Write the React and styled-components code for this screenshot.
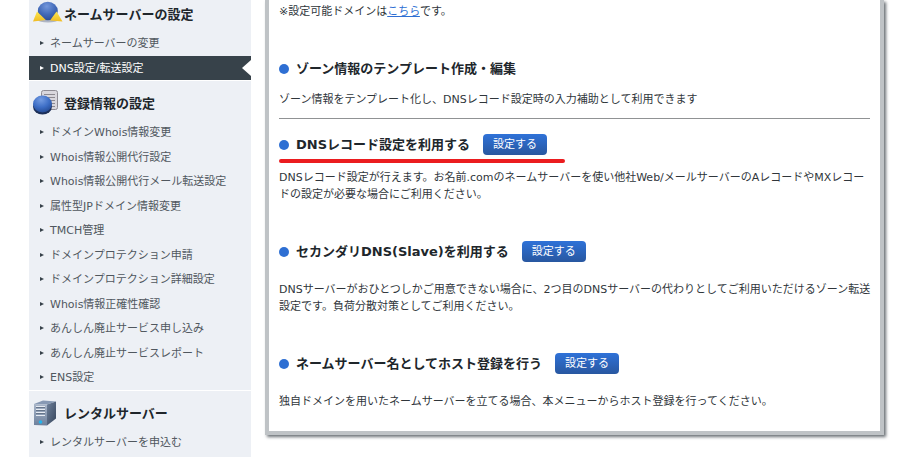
import styled, { createGlobalStyle, css } from 'styled-components'

const colors = {
  title: '#20262b',
  text: '#30363b',
  menuText: '#50575e',
  dark: '#37424a',
  menu: '#edf0f5',
  blue: '#2e6fd3',
  border: '#bfc3c6',
  red: '#eb1c1f',
}

const menus = [
  {
    title: 'ネームサーバーの設定',
    Icon: NameServerIcon,
    items: ['ネームサーバーの変更', 'DNS設定/転送設定'],
  },
  {
    title: '登録情報の設定',
    Icon: RegistrationIcon,
    items: [
      'ドメインWhois情報変更',
      'Whois情報公開代行設定',
      'Whois情報公開代行メール転送設定',
      '属性型JPドメイン情報変更',
      'TMCH管理',
      'ドメインプロテクション申請',
      'ドメインプロテクション詳細設定',
      'Whois情報正確性確認',
      'あんしん廃止サービス申し込み',
      'あんしん廃止サービスレポート',
      'ENS設定',
    ],
  },
  {
    title: 'レンタルサーバー',
    Icon: ServerIcon,
    items: ['レンタルサーバーを申込む'],
  },
]

const activeItem = 'DNS設定/転送設定'

export default function App() {
  return (
    <>
      <GlobalStyle />
      <Page>
        <Sidebar>
          {menus.map(({ title, Icon, items }) => (
            <MenuSection key={title}>
              <MenuTitle>
                <Icon />
                {title}
              </MenuTitle>
              <MenuList>
                {items.map((item) => (
                  <li key={item}>
                    <MenuLink href="#" $active={item === activeItem}>
                      {item}
                    </MenuLink>
                  </li>
                ))}
              </MenuList>
            </MenuSection>
          ))}
        </Sidebar>

        <Panel>
          <Text>
            ※設定可能ドメインは<Link href="#">こちら</Link>です。
          </Text>

          <Section>
            <Heading>
              <Title>ゾーン情報のテンプレート作成・編集</Title>
            </Heading>
            <Text>
              ゾーン情報をテンプレート化し、DNSレコード設定時の入力補助として利用できます
            </Text>
          </Section>

          <Divider />

          <Section $afterDivider>
            <Heading $marked>
              <Title>DNSレコード設定を利用する</Title>
              <Button type="button">設定する</Button>
            </Heading>
            <Text>
              DNSレコード設定が行えます。お名前.comのネームサーバーを使い他社Web/メールサーバーのAレコードやMXレコードの設定が必要な場合にご利用ください。
            </Text>
          </Section>

          <Section $spaced>
            <Heading>
              <Title>セカンダリDNS(Slave)を利用する</Title>
              <Button type="button">設定する</Button>
            </Heading>
            <Text>
              DNSサーバーがおひとつしかご用意できない場合に、2つ目のDNSサーバーの代わりとしてご利用いただけるゾーン転送設定です。負荷分散対策としてご利用ください。
            </Text>
          </Section>

          <Section $spaced>
            <Heading>
              <Title>ネームサーバー名としてホスト登録を行う</Title>
              <Button type="button">設定する</Button>
            </Heading>
            <Text>
              独自ドメインを用いたネームサーバーを立てる場合、本メニューからホスト登録を行ってください。
            </Text>
          </Section>
        </Panel>
      </Page>
    </>
  )
}

function NameServerIcon() {
  return (
    <Svg viewBox="0 0 30 26">
      <defs>
        <radialGradient id="globe" cx="45%" cy="25%" r="80%">
          <stop offset="0" stopColor="#7397dc" />
          <stop offset="0.55" stopColor="#4169b8" />
          <stop offset="1" stopColor="#2c4a90" />
        </radialGradient>
        <linearGradient id="arrow" x1="0" y1="0" x2="0" y2="1">
          <stop offset="0" stopColor="#fbe650" />
          <stop offset="1" stopColor="#f0bb22" />
        </linearGradient>
      </defs>
      <ellipse cx="15" cy="19" rx="10" ry="2.5" fill="#aeb5c4" />
      <ellipse cx="14.800" cy="10" rx="10" ry="9.300" fill="url(#globe)" />
      <path d="M4 10.500L12.800 19L0 20.500Z" fill="url(#arrow)" />
      <path d="M23.500 10.500L29.500 20.500L17 19.500Z" fill="url(#arrow)" />
    </Svg>
  )
}

function RegistrationIcon() {
  return (
    <Svg viewBox="0 0 30 26">
      <defs>
        <radialGradient id="ball" cx="42%" cy="25%" r="80%">
          <stop offset="0" stopColor="#749ce2" />
          <stop offset="0.55" stopColor="#3d6ec6" />
          <stop offset="1" stopColor="#234890" />
        </radialGradient>
      </defs>
      <rect x="8.500" y="0.500" width="16" height="19" rx="2" fill="#d9d7dd" stroke="#8f8c94" />
      <path d="M11 4.500h11M11 7.500h11M11 10.500h11M11 13.500h11M11 16.500h11" stroke="#8c8990" />
      <ellipse cx="9.500" cy="16.500" rx="9.500" ry="8" fill="#1c2f58" />
      <ellipse cx="9.500" cy="14" rx="9.500" ry="8.500" fill="url(#ball)" />
    </Svg>
  )
}

function ServerIcon() {
  return (
    <Svg viewBox="0 0 30 26">
      <defs>
        <linearGradient id="front" x1="0" y1="0" x2="0" y2="1">
          <stop offset="0" stopColor="#a9b6c9" />
          <stop offset="1" stopColor="#6d809c" />
        </linearGradient>
        <linearGradient id="side" x1="0" y1="0" x2="1" y2="1">
          <stop offset="0" stopColor="#6f819b" />
          <stop offset="1" stopColor="#35445b" />
        </linearGradient>
      </defs>
      <path d="M1 4L10 0.500L23 1.500L14 4.500Z" fill="#8799b4" />
      <path d="M14 4.500L23 1.500V18.500L14 25.500Z" fill="url(#side)" />
      <path d="M1 4L14 4.500V25.500L1 25Z" fill="url(#front)" />
      <path d="M3 6.500H12M3 9.500H12M3 12.500H12M3 15.500H12" stroke="#e6ebf2" />
      <path d="M3 7.500H12M3 10.500H12M3 13.500H12" stroke="#66758b" />
      <circle cx="7.500" cy="22" r="1.800" fill="#22b4ee" />
    </Svg>
  )
}

const GlobalStyle = createGlobalStyle`
  * {
    box-sizing: border-box;
  }
  body {
    margin: 0;
    background: #fff;
    color: ${colors.text};
    font-family: 'DejaVu Sans', 'Noto Sans CJK JP', sans-serif;
    font-size: 11px;
    line-height: 17px;
  }
`
const Page = styled.div`
  display: flex;
  align-items: flex-start;
  gap: 14px;
  padding: 0 38px 0 29px;
`
const Sidebar = styled.nav`
  flex: 0 0 222px;
  background: ${colors.menu};
  padding-bottom: 4px;
`
const MenuTitle = styled.h2`
  display: flex;
  align-items: center;
  gap: 1px;
  margin: 0;
  padding: 9px 4px 4px;
  color: ${colors.title};
  font-size: 13px;
  font-weight: 700;
`
const MenuSection = styled.section`
  & + & {
    border-top: 1px solid #fff;
  }
  &:first-child ${MenuTitle} {
    padding-top: 1px;
  }
`
const MenuList = styled.ul`
  margin: 0;
  padding: 0;
  list-style: none;

  li:nth-child(odd) {
    padding-bottom: 1px;
  }
`
const MenuLink = styled.a`
  position: relative;
  display: flex;
  align-items: center;
  gap: 6px;
  height: 24px;
  padding-left: 11px;
  color: ${colors.menuText};
  text-decoration: none;

  &::before {
    content: '';
    border: solid transparent;
    border-width: 2px 0 2px 4px;
    border-left-color: ${colors.dark};
  }

  ${({ $active }) =>
    $active &&
    css`
      background: ${colors.dark};
      color: #fff;

      &::before {
        border-left-color: #fff;
      }
      &::after {
        content: '';
        position: absolute;
        top: 4px;
        right: 0;
        border: solid transparent;
        border-width: 8px 9px 8px 0;
        border-right-color: #fff;
      }
    `}
`
const Svg = styled.svg`
  flex: none;
  width: 30px;
  height: 26px;
`
const Panel = styled.main`
  flex: 1;
  min-width: 0;
  padding: 3px 8px 21px 10px;
  border: 4px solid ${colors.border};
  border-top: 0;
  box-shadow: 2px 2px 3px #6a7075;
`
const Text = styled.p`
  margin: 0;
`
const Link = styled.a`
  color: ${colors.blue};
`
const Section = styled.section`
  display: flex;
  flex-direction: column;
  gap: ${({ $spaced, $afterDivider }) =>
    $spaced ? 19 : $afterDivider ? 14 : 12}px;
  margin-top: ${({ $afterDivider }) => ($afterDivider ? 15 : 38)}px;
`
const Heading = styled.div`
  position: relative;
  display: flex;
  align-items: center;
  gap: 13px;
  height: 21px;

  ${({ $marked }) =>
    $marked &&
    css`
      &::after {
        content: '';
        position: absolute;
        top: 25px;
        left: 0;
        width: 286px;
        height: 4px;
        border-radius: 2px;
        background: ${colors.red};
      }
    `}
`
const Title = styled.h3`
  display: flex;
  align-items: center;
  gap: 7px;
  margin: 0;
  color: ${colors.title};
  font-size: 13px;
  font-weight: 700;

  &::before {
    content: '';
    width: 10px;
    height: 10px;
    border-radius: 50%;
    background: ${colors.blue};
  }
`
const Button = styled.button`
  height: 21px;
  padding: 0 10px 1px;
  border: 0;
  border-radius: 4px;
  background: linear-gradient(#2f72d8, #2857a0);
  color: #fff;
  font: inherit;
  cursor: pointer;
`
const Divider = styled.hr`
  height: 1px;
  margin: 10px 2px 0 0;
  border: 0;
  background: #909294;
`
